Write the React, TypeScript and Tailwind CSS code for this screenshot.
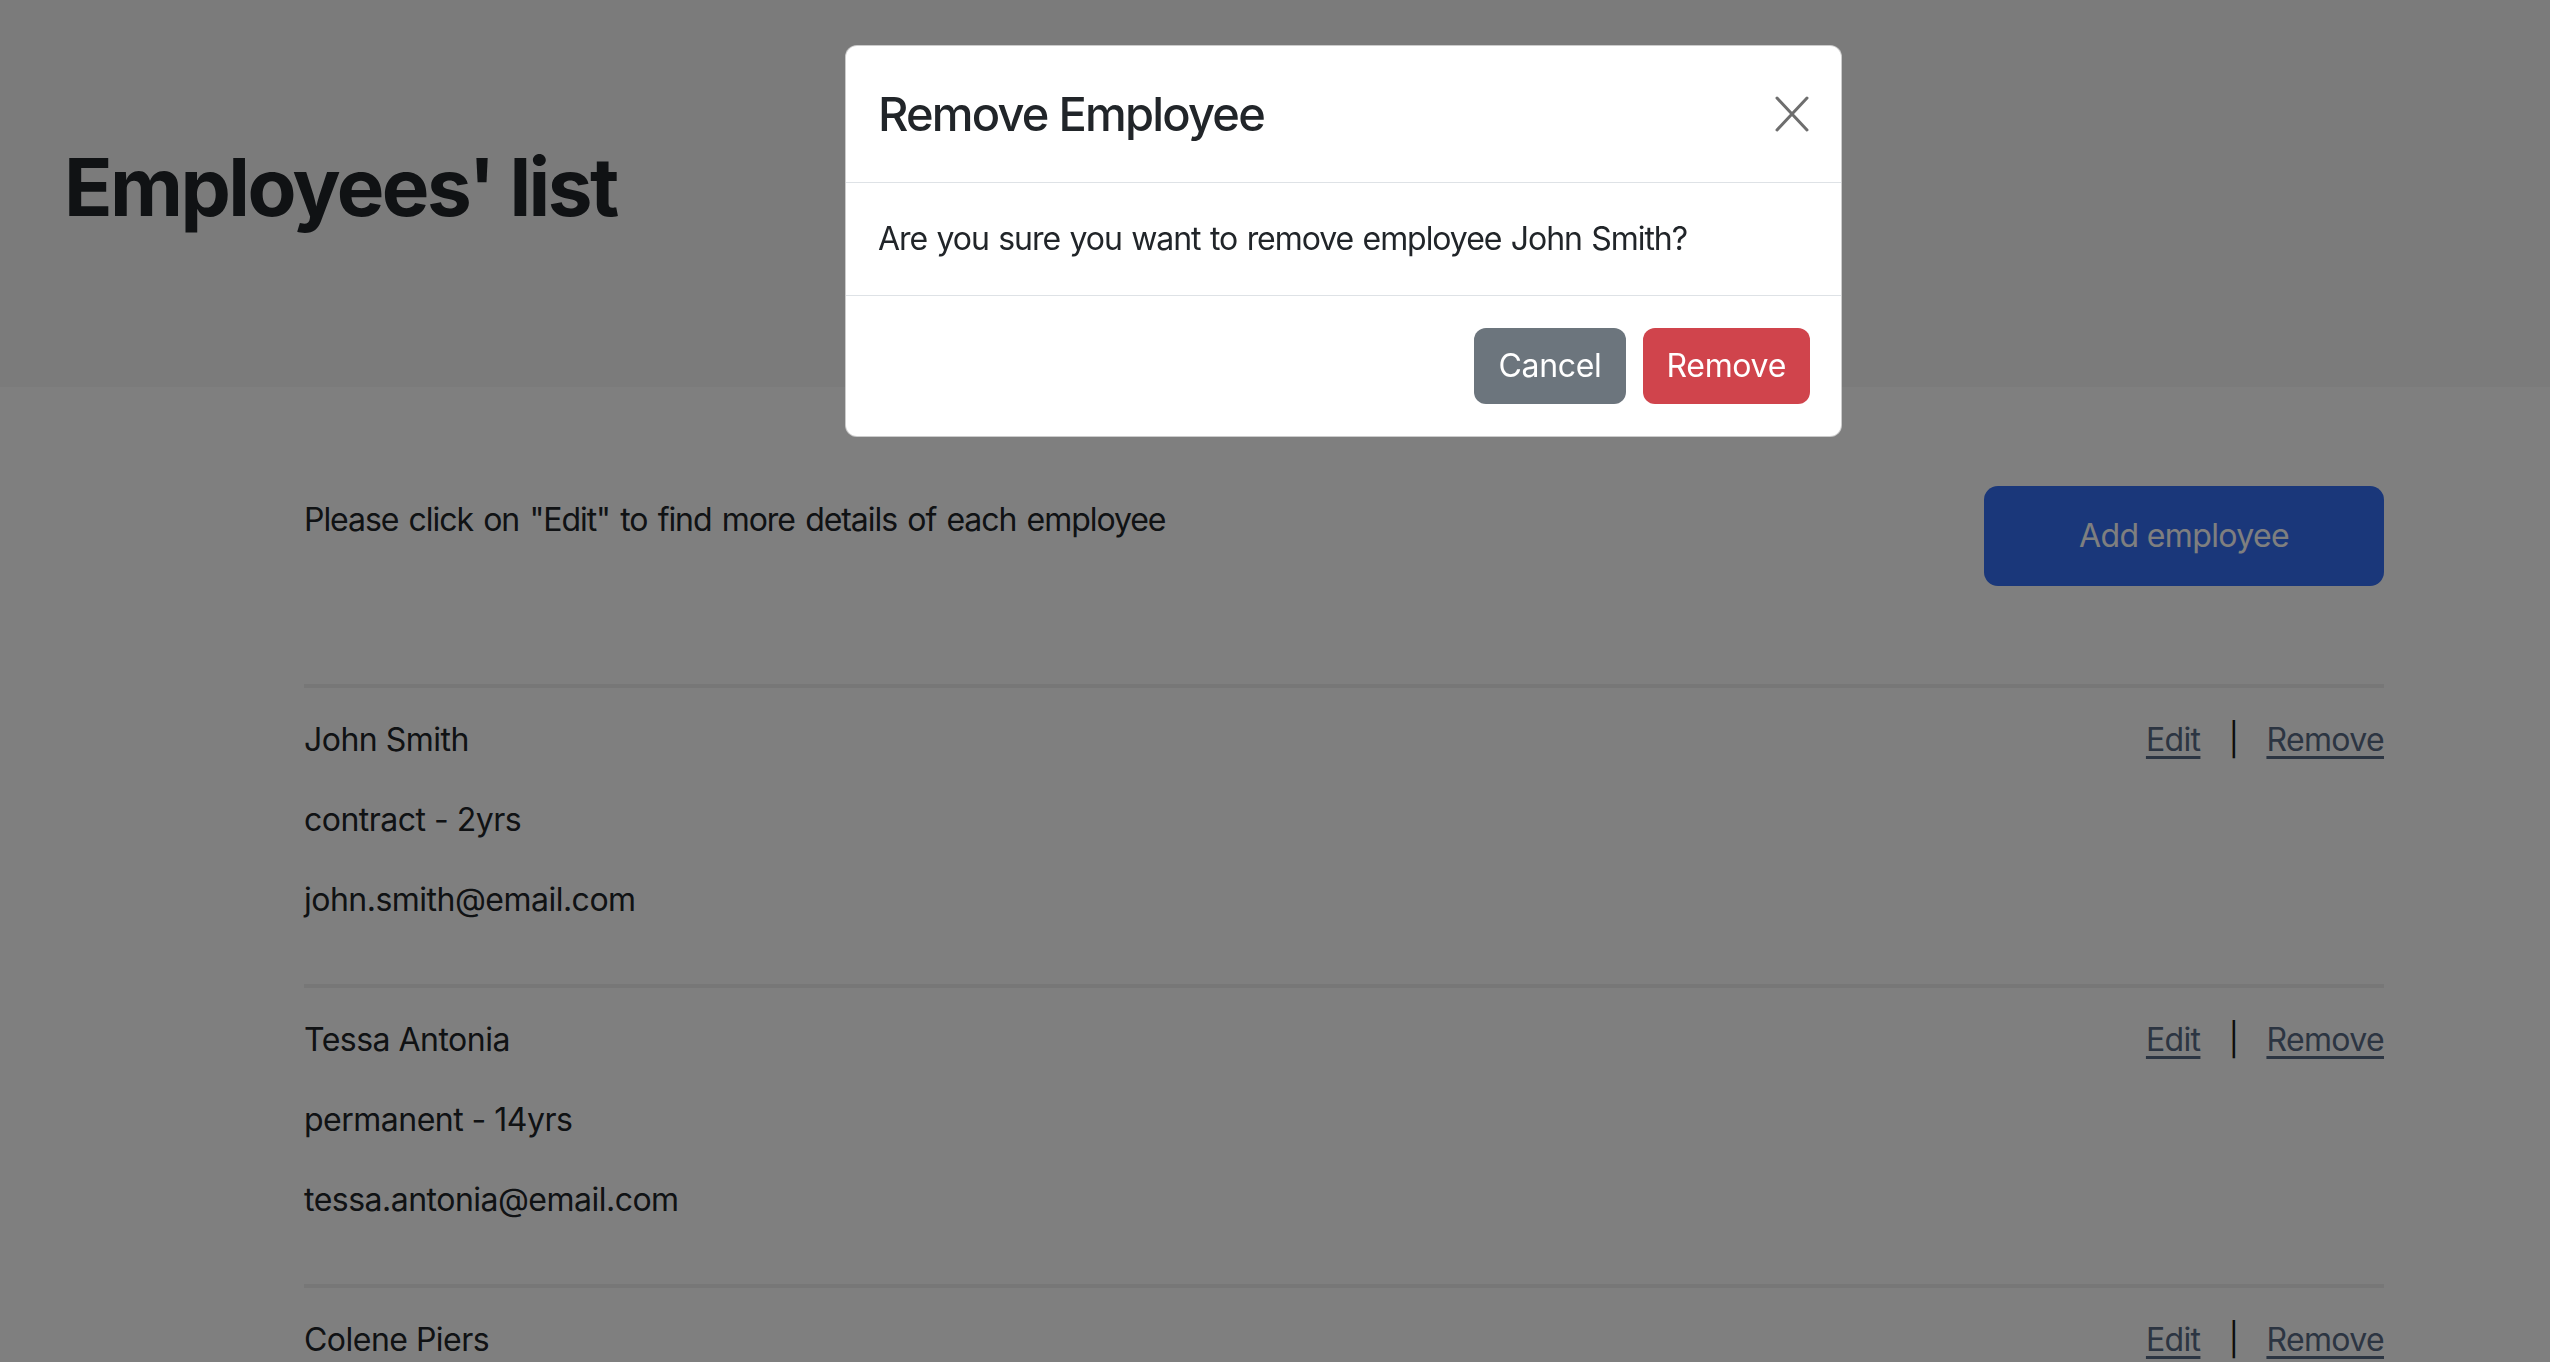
import React, { useState } from 'react';

type Employee = { id: number; name: string; contract: string; email: string };

const employees: Employee[] = [
  { id: 1, name: 'John Smith', contract: 'contract - 2yrs', email: 'john.smith@email.com' },
  { id: 2, name: 'Tessa Antonia', contract: 'permanent - 14yrs', email: 'tessa.antonia@email.com' },
  { id: 3, name: 'Colene Piers', contract: 'contract - 5yrs', email: 'colene.piers@email.com' },
];

const EmployeeRow: React.FC<{ emp: Employee; onRemove: (e: Employee) => void }> = ({ emp, onRemove }) => (
  <div className="border-t-[4px] border-[#efefef] pt-[28px] pb-[28px]">
    <div className="flex justify-between items-start">
      <div>
        <p className="text-[32px] leading-[48px] mb-[32px]">{emp.name}</p>
        <p className="text-[32px] leading-[48px] mb-[32px]">{emp.contract}</p>
        <p className="text-[32px] leading-[48px] mb-[32px]">{emp.email}</p>
      </div>
      <div className="flex items-center gap-[28px] text-[32px] leading-[48px] tracking-[-0.02em]">
        <a href="#" className="text-[#596a85] underline decoration-[3px] underline-offset-[5px]">Edit</a>
        <span className="text-[#1a1a1a]">|</span>
        <a href="#" onClick={(ev) => { ev.preventDefault(); onRemove(emp); }} className="text-[#596a85] underline decoration-[3px] underline-offset-[5px]">Remove</a>
      </div>
    </div>
  </div>
);

const RemoveModal: React.FC<{ emp: Employee; onClose: () => void }> = ({ emp, onClose }) => (
  <div className="fixed inset-0 z-50 bg-black/50">
    <div className="pl-[845px] pt-[45px]">
      <div className="w-[997px] bg-white rounded-[12px] border border-black/20 overflow-hidden">
        <div className="flex items-center justify-between px-[32px] py-[32px] border-b border-[#dee2e6]">
          <h5 className="text-[47px] leading-[72px] font-medium tracking-[-0.038em] text-[#212529]">Remove Employee</h5>
          <button onClick={onClose} className="w-[34px] h-[36px] flex items-center justify-center">
            <svg width="34" height="36" viewBox="0 0 34 36" fill="none">
              <path d="M2 2 L32 34 M32 2 L2 34" stroke="#6e6e6e" strokeWidth="3" strokeLinecap="round" />
            </svg>
          </button>
        </div>
        <div className="p-[32px]">
          <p className="text-[32px] leading-[48px] tracking-[-0.033em] [word-spacing:1.5px] text-[#212529]">Are you sure you want to remove employee {emp.name}?</p>
        </div>
        <div className="flex justify-end gap-[17px] px-[31px] py-[32px] border-t border-[#dee2e6] tracking-[-0.02em]">
          <button onClick={onClose} className="h-[76px] px-[24px] rounded-[12px] bg-[#6c757d] text-white text-[32px] leading-[48px]">Cancel</button>
          <button onClick={onClose} className="h-[76px] px-[24px] rounded-[12px] bg-[#d0444c] text-white text-[32px] leading-[48px]">Remove</button>
        </div>
      </div>
    </div>
  </div>
);

export default function App() {
  const [toRemove, setToRemove] = useState<Employee | null>(employees[0]);

  return (
    <div className="min-h-screen bg-white text-[#212529] tracking-[-0.032em] font-['Inter','Liberation_Sans',sans-serif]">
      <header className="bg-[#f6f6f6] h-[387px] pl-[64px] pt-[139px]">
        <h1 className="text-[80px] leading-[96px] font-bold tracking-[-0.032em]">Employees' list</h1>
      </header>

      <main className="ml-[304px] w-[2080px] pt-[99px]">
        <div className="flex justify-between items-start">
          <p className="text-[32px] leading-[48px] mt-[10px] tracking-[-0.033em] [word-spacing:2.3px]">Please click on "Edit" to find more details of each employee</p>
          <button className="w-[400px] h-[100px] rounded-[14px] bg-[#346ef4] text-white text-[32px] tracking-[-0.02em]">Add employee</button>
        </div>

        <div className="mt-[98px]">
          {employees.map((emp) => (
            <EmployeeRow key={emp.id} emp={emp} onRemove={setToRemove} />
          ))}
        </div>
      </main>

      {toRemove && <RemoveModal emp={toRemove} onClose={() => setToRemove(null)} />}
    </div>
  );
}
